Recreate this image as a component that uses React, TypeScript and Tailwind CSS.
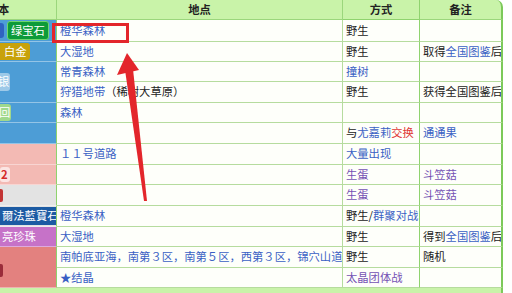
const font = "font-['Noto_Sans_CJK_SC','Noto_Sans',sans-serif]";

const blue = "text-[#3a5fc4]";
const purple = "text-[#7552b4]";
const red = "text-[#e03535]";

function Cell({
  children,
  className = "",
  tone = "text-[#222]",
}: {
  children?: React.ReactNode;
  className?: string;
  tone?: string;
}) {
  return (
    <div
      className={`flex items-center overflow-hidden whitespace-nowrap border-b border-r border-[#b6dc9e] bg-[#fefffa] px-[3px] text-[11.3px] leading-none ${tone} ${className}`}
    >
      {children}
    </div>
  );
}

function Left({ children, className = "" }: { children?: React.ReactNode; className?: string }) {
  return (
    <div
      className={`flex items-center gap-[3px] overflow-hidden whitespace-nowrap border-b border-r border-b-white/40 border-r-[#8fd36e] text-[11.3px] leading-none ${className}`}
    >
      {children}
    </div>
  );
}

function Badge({ children, className = "" }: { children?: React.ReactNode; className?: string }) {
  return <span className={`rounded-[3px] px-[3px] py-[3px] text-white ${className}`}>{children}</span>;
}

const mid = "border-r-[#8fd36e]";
const last = "border-r-2 border-r-[#7cc95a]";

export default function App() {
  return (
    <div className={`relative h-[293px] w-[512px] overflow-hidden bg-white ${font}`}>
      <div className="grid w-[503px] grid-cols-[57px_286px_77px_83px] grid-rows-[20px_22px_20px_20px_21px_20px_21px_21px_20px_21px_21px_20px_21px_20px_20px]">
        {/* header */}
        <div className="flex items-center overflow-hidden border-b border-r border-[#9bd67c] bg-[#c9f3a9] text-[11.3px] font-bold text-[#222]">
          <span className="-ml-[2px]">本</span>
        </div>
        <div className="flex items-center justify-center border-b border-r border-[#9bd67c] bg-[#c9f3a9] text-[11.3px] font-bold text-[#222]">地点</div>
        <div className="flex items-center justify-center border-b border-r border-[#8fd36e] bg-[#c9f3a9] text-[11.3px] font-bold text-[#222]">方式</div>
        <div className="flex items-center justify-center rounded-tr-[7px] border-b border-r-2 border-b-[#9bd67c] border-r-[#7cc95a] bg-[#c9f3a9] text-[11.3px] font-bold text-[#222]">备注</div>

        {/* row 1 */}
        <Left className="bg-[#4d9dd6]">
          <span className="h-[15px] w-[4px] rounded-r-[3px] bg-[#2f63c0]" />
          <Badge className="border border-[#6fd66f] bg-[#0d9b3a]">绿宝石</Badge>
        </Left>
        <Cell tone={blue}>橙华森林</Cell>
        <Cell className={mid}>野生</Cell>
        <Cell className={last} />

        {/* row 2 */}
        <Left className="bg-[#4d9dd6]">
          <Badge className="-ml-[1px] rounded-l-none bg-[#c8a20a] pl-[5px]">白金</Badge>
        </Left>
        <Cell tone={blue}>大湿地</Cell>
        <Cell className={mid}>野生</Cell>
        <Cell className={last}>
          取得<span className={blue}>全国图鉴</span>后
        </Cell>

        {/* rows 3-4 */}
        <Left className="row-span-2 bg-[#4d9dd6]">
          <span className="-ml-[5px] rounded-[3px] bg-white/45 py-[3px] pl-[3px] pr-[1px] text-white">银</span>
        </Left>
        <Cell tone={blue}>常青森林</Cell>
        <Cell className={mid} tone={blue}>撞树</Cell>
        <Cell className={last} />

        <Cell>
          <span className={blue}>狩猎地带</span>（稀树大草原）
        </Cell>
        <Cell className={mid}>野生</Cell>
        <Cell className={last}>获得全国图鉴后</Cell>

        {/* row 5 */}
        <Left className="bg-[#4d9dd6]">
          <span className="-ml-[4px] rounded-[3px] bg-[#9fd88c] py-[3px] pl-[3px] pr-[1px] text-white">回</span>
        </Left>
        <Cell tone={blue}>森林</Cell>
        <Cell className={mid} />
        <Cell className={last} />

        {/* row 6 */}
        <Left className="bg-[#4d9dd6]" />
        <Cell />
        <Cell className={mid}>
          与<span className={blue}>尤嘉莉</span>
          <span className={red}>交换</span>
        </Cell>
        <Cell className={last} tone={blue}>通通果</Cell>

        {/* row 7 */}
        <Left className="bg-[#f3bab4]" />
        <Cell tone={blue}>１１号道路</Cell>
        <Cell className={mid} tone={blue}>大量出现</Cell>
        <Cell className={last} />

        {/* row 8 */}
        <Left className="bg-[#f3bab4]">
          <span className="rounded-[3px] bg-[#fbe5e3] py-[2px] pl-[1px] pr-[2px] font-bold text-[#d42a2a]">2</span>
        </Left>
        <Cell />
        <Cell className={mid} tone={purple}>生蛋</Cell>
        <Cell className={last} tone={purple}>斗笠菇</Cell>

        {/* row 9 */}
        <Left className="bg-[#e3e3e3]">
          <span className="h-[13px] w-[3px] rounded-r-[2px] bg-[#c23434]" />
        </Left>
        <Cell />
        <Cell className={mid} tone={purple}>生蛋</Cell>
        <Cell className={last} tone={purple}>斗笠菇</Cell>

        {/* row 10 */}
        <Left className="bg-[#e3e3e3]">
          <span className="rounded-[3px] rounded-l-none bg-[#1c5ba3] py-[3px] pl-[2px] pr-[1px] text-white">爾法藍寶石</span>
        </Left>
        <Cell tone={blue}>橙华森林</Cell>
        <Cell className={mid}>
          野生/<span className={blue}>群聚对战</span>
        </Cell>
        <Cell className={last} />

        {/* row 11 */}
        <Left className="bg-[#c672c8]">
          <span className="pl-[2px] text-white">亮珍珠</span>
        </Left>
        <Cell tone={blue}>大湿地</Cell>
        <Cell className={mid}>野生</Cell>
        <Cell className={last}>
          得到<span className={blue}>全国图鉴</span>后
        </Cell>

        {/* rows 12-13 */}
        <Left className="row-span-2 bg-[#e3817f]">
          <span className="mt-[6px] h-[13px] w-[3px] rounded-r-[2px] bg-[#9a2c3a]" />
        </Left>
        <Cell tone={blue}>南帕底亚海，南第３区，南第５区，西第３区，锦穴山道</Cell>
        <Cell className={mid}>野生</Cell>
        <Cell className={last}>随机</Cell>

        <Cell tone={blue}>★结晶</Cell>
        <Cell className={mid} tone={purple}>太晶团体战</Cell>
        <Cell className={last} />

        {/* footer */}
        <div className="col-span-4 border-r-2 border-[#7cc95a] bg-[#c9f3a9]" />
      </div>

      {/* annotation: red box + arrow */}
      <div className="absolute left-[52px] top-[23px] h-[20px] w-[77px] border-[3px] border-[#e3262b]" />
      <svg className="pointer-events-none absolute left-0 top-0" width="512" height="293" viewBox="0 0 512 293">
        <polygon points="127,53 117,75 139,70" fill="#e3262b" />
        <polygon points="125,70 133,69 147,201 144,201" fill="#e3262b" />
      </svg>
    </div>
  );
}
